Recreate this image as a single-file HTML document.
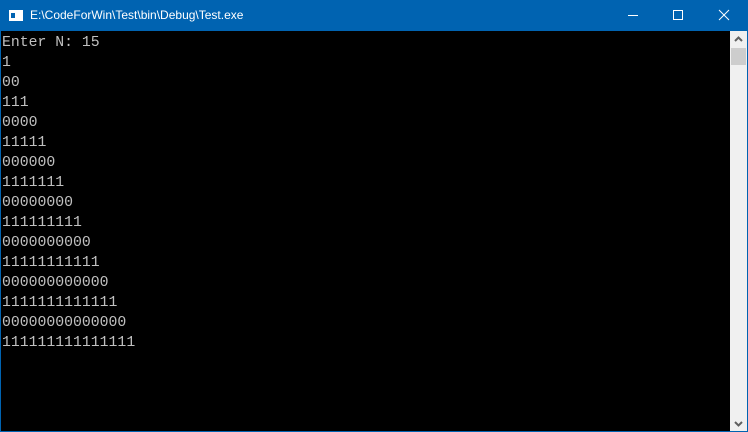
<!DOCTYPE html>
<html><head><style>
html,body{margin:0;padding:0;width:748px;height:432px;overflow:hidden;background:#0063b1;}
.title{position:absolute;left:0;top:0;width:748px;height:31px;background:#0063b1;color:#fff;font:12px "Liberation Sans",sans-serif;}
.title .t{position:absolute;left:30px;top:8px;}
.ico{position:absolute;left:9px;top:10px;width:14px;height:11px;background:#fff;}
.ico:after{content:"";position:absolute;left:2px;top:3px;width:4px;height:5px;background:#0063b1;}
.term{position:absolute;left:1px;top:31px;width:729px;height:400px;background:#000;}
pre{margin:0;position:absolute;left:1px;top:2px;font:14.8px/20px "Liberation Mono",monospace;color:#c0c0c0;letter-spacing:0;}
.sb{position:absolute;left:730px;top:31px;width:17px;height:400px;background:#f0f0f0;}
.thumb{position:absolute;left:1px;top:17px;width:15px;height:17px;background:#cdcdcd;}
</style></head><body>
<div class="title"><div class="ico"></div><span class="t">E:\CodeForWin\Test\bin\Debug\Test.exe</span>
<svg style="position:absolute;left:600px;top:0" width="148" height="31">
<line x1="28" y1="15.5" x2="38" y2="15.5" stroke="#fff"/>
<rect x="73.5" y="10.5" width="9" height="9" fill="none" stroke="#fff"/>
<line x1="119" y1="10" x2="129" y2="20" stroke="#fff"/><line x1="129" y1="10" x2="119" y2="20" stroke="#fff"/>
</svg></div>
<div class="term"><pre>Enter N: 15
1
00
111
0000
11111
000000
1111111
00000000
111111111
0000000000
11111111111
000000000000
1111111111111
00000000000000
111111111111111</pre></div>
<div class="sb"><svg width="17" height="400" style="position:absolute;left:0;top:0">
<polyline points="5,10 8.5,6.5 12,10" fill="none" stroke="#606060" stroke-width="2"/>
<polyline points="5,391 8.5,394.5 12,391" fill="none" stroke="#606060" stroke-width="2"/></svg>
<div class="thumb"></div></div>
</body></html>
